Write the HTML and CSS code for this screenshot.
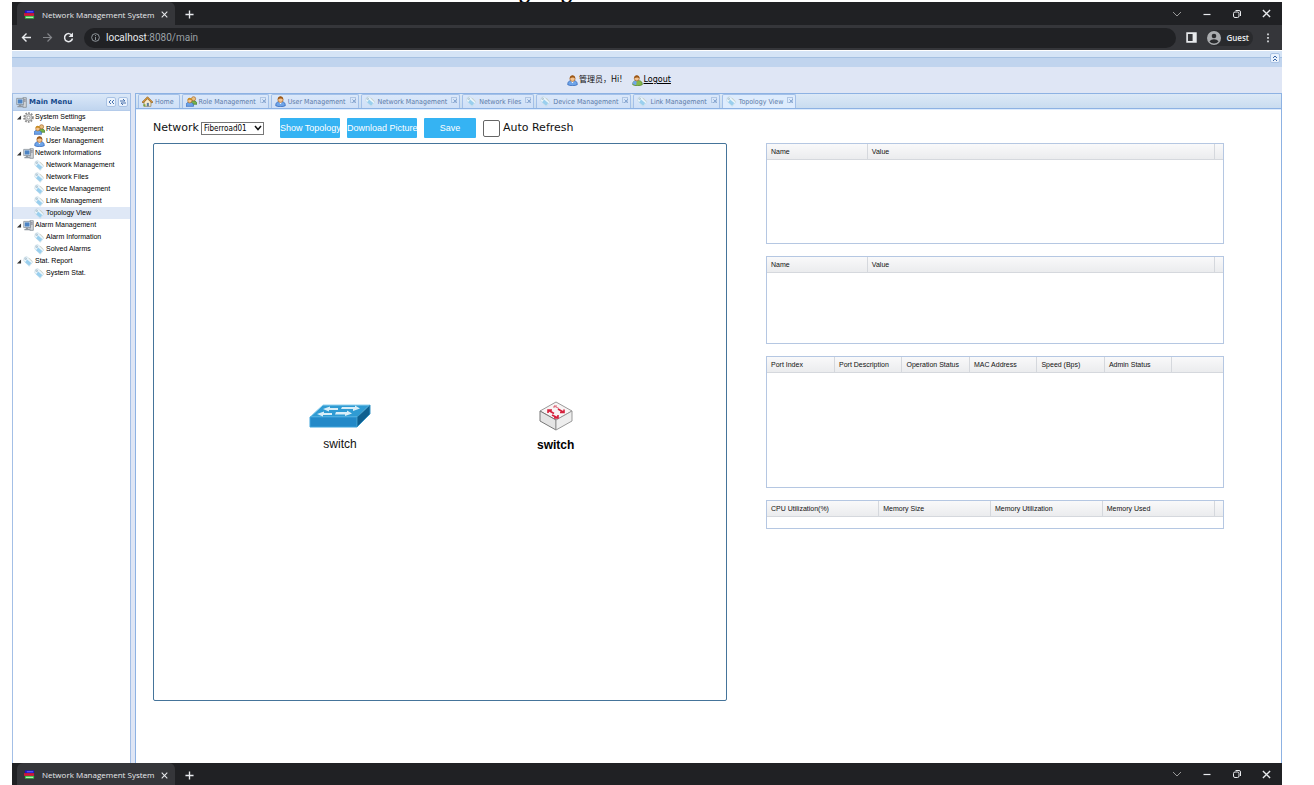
FILE: index.html
```
<!DOCTYPE html>
<html lang="en">
<head>
<meta charset="utf-8">
<title>Network Management System</title>
<link rel="stylesheet" href="styles.css">
</head>
<body>
<svg class="sprite" aria-hidden="true">
  <symbol id="i-fav" viewBox="0 0 12 10"><path fill="#1c14c8" d="M1 0h10v3H1z"/><path fill="#7a70ff" d="M3 1h7v1H3z"/><path fill="#d0143c" d="M0 3h11v3H0z"/><path fill="#30c040" d="M1 6h10v3H1z"/><path fill="#d8ffd0" d="M2 7h8v1H2z"/></symbol>
  <symbol id="i-tag" viewBox="0 0 16 16"><path d="M2 2l4-1 8 8-5 6-8-8z" fill="#edf7fc" stroke="#c3d8e4"/><path d="M6 5l6 5-3 4-6-5z" fill="#9acfee"/><path d="M9 3l5 5" stroke="#c9c9b8"/><circle cx="4" cy="4" r="1.2" fill="#fff" stroke="#8aa9bd"/></symbol>
  <symbol id="i-user" viewBox="0 0 16 16"><path d="M1 14c0-5 3-6 7-6s7 1 7 6c-3 2-11 2-14 0z" fill="#6ea4e8" stroke="#2f62b5"/><path d="M6 9l2 3 2-3z" fill="#fff"/><circle cx="8" cy="5.500" r="3.800" fill="#f3c391" stroke="#a8682a"/><path d="M4 5c0-6 8-6 8 0-2-2-5-2-8 0z" fill="#9c5716"/></symbol>
  <symbol id="i-out" viewBox="0 0 16 16"><path d="M1 14c0-5 3-6 7-6s7 1 7 6c-3 2-11 2-14 0z" fill="#86b84a" stroke="#4d7f2a"/><path d="M1 13c0-4 3-5 6-5l-1 7z" fill="#6ea4e8"/><circle cx="7" cy="5" r="3.600" fill="#f3c391" stroke="#a8682a"/><path d="M3 5c0-6 8-6 8 0-2-2-5-2-8 0z" fill="#9c5716"/></symbol>
  <symbol id="i-role" viewBox="0 0 16 16"><path d="M7 12c0-4 2-5 4-5 3 0 5 2 5 5z" fill="#77b34a" stroke="#43792a"/><circle cx="11" cy="4" r="3" fill="#eac07f" stroke="#a8682a"/><path d="M0 15c0-5 2-6 5-6s6 1 6 6z" fill="#6ea4e8" stroke="#2f62b5"/><circle cx="5.500" cy="7" r="3" fill="#f3c391" stroke="#b5751f"/><path d="M2 6c1-5 6-4 7 0-3-1-5-1-7 0z" fill="#c98b1c"/></symbol>
  <symbol id="i-home" viewBox="0 0 16 16"><path d="M3 8v7h10V8L8 3z" fill="#f7ecd0" stroke="#8a7a52"/><path d="M0 9l8-8 8 8-2 1-6-6-6 6z" fill="#d99a3c" stroke="#8e5c18"/><path d="M7 10h3v5H7z" fill="#5d7e9c"/><path d="M2 15h3v-3H2z" fill="#78a83c"/></symbol>
  <symbol id="i-pc" viewBox="0 0 16 16"><path d="M10 1h5v14h-5z" fill="#d2d6da" stroke="#777f88"/><path d="M11 4h3M11 6h3" stroke="#667"/><path d="M1 2h10v9H1z" fill="#dfe5ea" stroke="#78828c"/><path d="M2.500 3.500h7v6h-7z" fill="#4d84c4"/><path d="M4 11h4v2H4zM2 13h8v2H2z" fill="#9098a0"/></symbol>
  <symbol id="i-gear" viewBox="0 0 16 16"><circle cx="8" cy="8" r="6.200" fill="none" stroke="#8c8c8c" stroke-width="3" stroke-dasharray="2.400 1.600"/><circle cx="8" cy="8" r="5" fill="#d6d6d6" stroke="#909090"/><circle cx="8" cy="8" r="2" fill="#fff" stroke="#888"/></symbol>
  <symbol id="i-arrow" viewBox="0 0 6 6"><path d="M5.500.5v5h-5z" fill="#333"/></symbol>
  <symbol id="i-x" viewBox="0 0 10 10"><path d="M1 1l8 8M9 1l-8 8" stroke="currentColor" stroke-width="1.500" fill="none"/></symbol>
  <symbol id="i-plus" viewBox="0 0 10 10"><path d="M5 .5v9M.5 5h9" stroke="currentColor" stroke-width="1.500"/></symbol>
  <symbol id="i-down" viewBox="0 0 10 10"><path d="M1 3l4 4 4-4" stroke="currentColor" fill="none"/></symbol>
  <symbol id="i-min" viewBox="0 0 10 10"><path d="M1.500 5.500h7" stroke="currentColor" stroke-width="1.200"/></symbol>
  <symbol id="i-restore" viewBox="0 0 10 10"><rect x="1.500" y="3" width="5.500" height="5.500" rx="1.500" fill="none" stroke="currentColor"/><path d="M3.500 1.500H7Q8.500 1.500 8.500 3v4" fill="none" stroke="currentColor"/></symbol>
</svg>

<div class="page">
  <div class="cut-heading" aria-hidden="true"><span>g</span><span>g</span></div>

  <div class="tabbar">
    <div class="browser-tab">
      <svg class="fav"><use href="#i-fav"/></svg>
      <span>Network Management System</span>
      <button class="plain" aria-label="Close tab"><svg class="g7"><use href="#i-x"/></svg></button>
    </div>
    <button class="plain new-tab" aria-label="New tab"><svg class="g9"><use href="#i-plus"/></svg></button>
    <div class="window-buttons">
      <button class="plain dim" aria-label="Search tabs"><svg class="g10"><use href="#i-down"/></svg></button>
      <button class="plain" aria-label="Minimize"><svg class="g10"><use href="#i-min"/></svg></button>
      <button class="plain" aria-label="Restore"><svg class="g10"><use href="#i-restore"/></svg></button>
      <button class="plain" aria-label="Close"><svg class="g9"><use href="#i-x"/></svg></button>
    </div>
  </div>

  <div class="toolbar">
    <button class="plain" aria-label="Back"><svg class="g11" viewBox="0 0 11 11"><path d="M10 5.500H1.500M5.500 1.500l-4 4 4 4" stroke="currentColor" stroke-width="1.400" fill="none"/></svg></button>
    <button class="plain faded" aria-label="Forward"><svg class="g11" viewBox="0 0 11 11"><path d="M1 5.500h8.500M5.500 1.500l4 4-4 4" stroke="currentColor" stroke-width="1.200" fill="none"/></svg></button>
    <button class="plain" aria-label="Reload"><svg class="g11" viewBox="0 0 11 11"><path d="M9 3.500A4 4 0 1 0 9.500 6.500" stroke="currentColor" stroke-width="1.500" fill="none"/><path d="M10 .5v4.500H5.500z" fill="currentColor"/></svg></button>
    <div class="address">
      <svg class="g9" viewBox="0 0 10 10"><circle cx="5" cy="5" r="4.300" fill="none" stroke="currentColor"/><path d="M5 4.500V8M5 2.300v1.200" stroke="currentColor"/></svg>
      <span><b>localhost</b>:8080/main</span>
    </div>
    <button class="plain" aria-label="Side panel"><svg class="g11" viewBox="0 0 10 10"><path d="M1 1h8v8H1z" fill="none" stroke="currentColor" stroke-width="1.500"/><path d="M6 1h3v8H6z" fill="currentColor"/></svg></button>
    <button class="plain guest"><svg class="avatar" viewBox="0 0 14 14"><circle cx="7" cy="7" r="7" fill="#a9abae"/><circle cx="7" cy="5" r="2.300" fill="#292a2d"/><path d="M2.500 10.500c2-3 7-3 9 0-2 2.500-7 2.500-9 0z" fill="#292a2d"/></svg>Guest</button>
    <button class="plain" aria-label="Menu"><svg class="g10" viewBox="0 0 10 10"><path d="M4.200.5h1.600v1.800H4.200zM4.200 4h1.600v1.800H4.200zM4.200 7.500h1.600v1.800H4.200z" fill="currentColor"/></svg></button>
  </div>

  <header class="north">
    <div class="north-title"><button class="tool" aria-label="Collapse header"><svg viewBox="0 0 8 8"><path d="M2 4l2-2 2 2M2 7l2-2 2 2" fill="none" stroke="#3b66a5"/></svg></button></div>
    <div class="greeting">
      <svg class="ico"><use href="#i-user"/></svg><span class="hello">管理员，Hi!</span>
      <svg class="ico"><use href="#i-out"/></svg><a href="#logout">Logout</a>
    </div>
  </header>

  <div class="app">
    <nav class="side" aria-label="Main Menu">
      <div class="side-title">
        <svg class="ico"><use href="#i-pc"/></svg><h2>Main Menu</h2>
        <button class="tool" aria-label="Collapse menu"><svg viewBox="0 0 8 8"><path d="M4 2L2 4l2 2M7 2L5 4l2 2" fill="none" stroke="#4a73ad"/></svg></button>
        <button class="tool" aria-label="Refresh menu"><svg viewBox="0 0 8 8"><path d="M1 3h5M4 1l2 2M7 5H2M4 7L2 5" fill="none" stroke="#4a73ad"/></svg></button>
      </div>
      <ul class="tree">
        <li><a href="#s"><svg class="arw"><use href="#i-arrow"/></svg><svg class="ico"><use href="#i-gear"/></svg>System Settings</a>
          <ul>
            <li><a href="#s1"><svg class="ico"><use href="#i-role"/></svg>Role Management</a></li>
            <li><a href="#s2"><svg class="ico"><use href="#i-user"/></svg>User Management</a></li>
          </ul></li>
        <li><a href="#n"><svg class="arw"><use href="#i-arrow"/></svg><svg class="ico"><use href="#i-pc"/></svg>Network Informations</a>
          <ul>
            <li><a href="#n1"><svg class="ico"><use href="#i-tag"/></svg>Network Management</a></li>
            <li><a href="#n2"><svg class="ico"><use href="#i-tag"/></svg>Network Files</a></li>
            <li><a href="#n3"><svg class="ico"><use href="#i-tag"/></svg>Device Management</a></li>
            <li><a href="#n4"><svg class="ico"><use href="#i-tag"/></svg>Link Management</a></li>
            <li><a href="#n5" class="current"><svg class="ico"><use href="#i-tag"/></svg>Topology View</a></li>
          </ul></li>
        <li><a href="#a"><svg class="arw"><use href="#i-arrow"/></svg><svg class="ico"><use href="#i-pc"/></svg>Alarm Management</a>
          <ul>
            <li><a href="#a1"><svg class="ico"><use href="#i-tag"/></svg>Alarm Information</a></li>
            <li><a href="#a2"><svg class="ico"><use href="#i-tag"/></svg>Solved Alarms</a></li>
          </ul></li>
        <li><a href="#r"><svg class="arw"><use href="#i-arrow"/></svg><svg class="ico"><use href="#i-tag"/></svg>Stat. Report</a>
          <ul>
            <li><a href="#r1"><svg class="ico"><use href="#i-tag"/></svg>System Stat.</a></li>
          </ul></li>
      </ul>
    </nav>

    <main class="center">
      <div class="tabs">
        <div class="tab"><button class="plain"><svg class="ico"><use href="#i-home"/></svg>Home</button></div>
        <div class="tab"><button class="plain"><svg class="ico"><use href="#i-role"/></svg>Role Management</button><button class="close" aria-label="Close"><svg><use href="#i-x"/></svg></button></div>
        <div class="tab"><button class="plain"><svg class="ico"><use href="#i-user"/></svg>User Management</button><button class="close" aria-label="Close"><svg><use href="#i-x"/></svg></button></div>
        <div class="tab"><button class="plain"><svg class="ico"><use href="#i-tag"/></svg>Network Management</button><button class="close" aria-label="Close"><svg><use href="#i-x"/></svg></button></div>
        <div class="tab"><button class="plain"><svg class="ico"><use href="#i-tag"/></svg>Network Files</button><button class="close" aria-label="Close"><svg><use href="#i-x"/></svg></button></div>
        <div class="tab"><button class="plain"><svg class="ico"><use href="#i-tag"/></svg>Device Management</button><button class="close" aria-label="Close"><svg><use href="#i-x"/></svg></button></div>
        <div class="tab"><button class="plain"><svg class="ico"><use href="#i-tag"/></svg>Link Management</button><button class="close" aria-label="Close"><svg><use href="#i-x"/></svg></button></div>
        <div class="tab active"><button class="plain"><svg class="ico"><use href="#i-tag"/></svg>Topology View</button><button class="close" aria-label="Close"><svg><use href="#i-x"/></svg></button></div>
      </div>

      <div class="view">
        <form class="controls">
          <label for="network">Network</label>
          <span class="picker"><select id="network"><option>Fiberroad01</option></select><svg viewBox="0 0 8 6"><path d="M1 1l3 3.500L7 1" fill="none" stroke="#111" stroke-width="1.500"/></svg></span>
          <button type="button" class="action show">Show Topology</button>
          <button type="button" class="action download">Download Picture</button>
          <button type="button" class="action save">Save</button>
          <input type="checkbox" id="auto"><label for="auto">Auto Refresh</label>
        </form>
        <div class="columns">
          <section class="canvas" aria-label="Topology">
            <div class="node node-blue">
              <svg width="62" height="26" viewBox="0 0 62 26"><path d="M14 2h47L48 14H1z" fill="#2f9bd3" stroke="#8fd0ee"/><path d="M1 14h47v10H1z" fill="#2389c8" stroke="#3ea4dc"/><path d="M48 14L61 2v9L48 24z" fill="#0f5f8f" stroke="#3996c6"/><g fill="#d9eef8"><path d="M33 4h13V2.500l5 3-7 2.500V6H32zM29 5v2H20v1.500l-6-2.500 7-2.500V5zM27 9h11V7.500l5 3-7 2.500v-1.500H26zM23 10v2H14v1.500L8 11l7-2.500V10z"/></g></svg>
              <span>switch</span>
            </div>
            <div class="node node-red">
              <svg width="34" height="30" viewBox="0 0 34 30"><path d="M17 1l16 9-16 9L1 10z" fill="#f8f4f4" stroke="#999"/><path d="M1 10l16 9v10L1 20z" fill="#e4e4e4" stroke="#777"/><path d="M33 10l-16 9v10l16-9z" fill="#eee" stroke="#999"/><g fill="none" stroke="#d5213c" stroke-width="1.600"><path d="M9 9l6 3.500M9 12V9h4M19 8l6 3.500M25 8.500v3h-4M13 14l6 3M19 14v3h-4"/><path d="M15 5l5 2.500M15 7V5h3" stroke="#dc6576" stroke-width="1"/></g></svg>
              <span>switch</span>
            </div>
          </section>
          <div class="panels">
            <div class="panel p-device"><table aria-label="Device details"><colgroup><col class="w22"><col><col class="w2"></colgroup><thead><tr><th>Name</th><th>Value</th><td></td></tr></thead></table></div>
            <div class="panel p-link"><table aria-label="Link details"><colgroup><col class="w22"><col><col class="w2"></colgroup><thead><tr><th>Name</th><th>Value</th><td></td></tr></thead></table></div>
            <div class="panel p-port"><table aria-label="Ports"><colgroup><col class="w15"><col class="w15"><col class="w15"><col class="w15"><col class="w15"><col class="w15"><col></colgroup><thead><tr><th>Port Index</th><th>Port Description</th><th>Operation Status</th><th>MAC Address</th><th>Speed (Bps)</th><th>Admin Status</th><td></td></tr></thead></table></div>
            <div class="panel p-cpu"><table aria-label="Utilization"><colgroup><col><col><col><col><col class="w2"></colgroup><thead><tr><th>CPU Utilization(%)</th><th>Memory Size</th><th>Memory Utilization</th><th>Memory Used</th><td></td></tr></thead></table></div>
          </div>
        </div>
      </div>
    </main>
  </div>

  <div class="tabbar bottom">
    <div class="browser-tab">
      <svg class="fav"><use href="#i-fav"/></svg>
      <span>Network Management System</span>
      <button class="plain" aria-label="Close tab"><svg class="g7"><use href="#i-x"/></svg></button>
    </div>
    <button class="plain new-tab" aria-label="New tab"><svg class="g9"><use href="#i-plus"/></svg></button>
    <div class="window-buttons">
      <button class="plain dim" aria-label="Search tabs"><svg class="g10"><use href="#i-down"/></svg></button>
      <button class="plain" aria-label="Minimize"><svg class="g10"><use href="#i-min"/></svg></button>
      <button class="plain" aria-label="Restore"><svg class="g10"><use href="#i-restore"/></svg></button>
      <button class="plain" aria-label="Close"><svg class="g9"><use href="#i-x"/></svg></button>
    </div>
  </div>
</div>
</body>
</html>
```
FILE: styles.css
```
* { box-sizing: border-box; }
body { margin: 0; background: #fff; font: 7px/12px "Liberation Sans", "Noto Sans CJK SC", sans-serif; color: #111; }
svg { display: block; flex: none; }
.sprite { width: 0; height: 0; position: absolute; }
.page { display: flex; flex-direction: column; min-height: 100vh; padding: 0 32px 0 12px; }
button { font: inherit; cursor: pointer; }
.plain { display: flex; align-items: center; border: 0; padding: 0; background: none; color: inherit; }

.cut-heading { display: flex; align-items: flex-end; gap: 31px; height: 2px; padding-left: 507px; overflow: hidden; font: bold 22px/22px "Liberation Serif", serif; color: #000; }

.ico { width: 11px; height: 11px; }
.g7 { width: 7px; height: 7px; }
.g9 { width: 9px; height: 9px; }
.g10 { width: 10px; height: 10px; }
.g11 { width: 11px; height: 11px; }

/* Browser frame */
.tabbar { display: flex; align-items: stretch; height: 23px; background: #202124; color: #e8eaed; padding-right: 11px; }
.tabbar.bottom { height: 22px; }
.browser-tab { display: flex; align-items: center; gap: 7px; margin-left: 5px; padding: 2px 7px 0; background: #35363a; border-radius: 6px 6px 0 0; font: 8px/12px "Open Sans", "Noto Sans", sans-serif; }
.fav { width: 11px; height: 10px; }
.new-tab { margin-left: 10px; padding-top: 2px; }
.window-buttons { display: flex; align-items: center; gap: 20px; margin-left: auto; }
.dim { color: #999; }
.toolbar { display: flex; align-items: center; gap: 10px; height: 25px; padding: 0 9px; background: #35363a; color: #e8eaed; }
.faded { color: #84868a; }
.address { flex: 1; display: flex; align-items: center; gap: 6px; height: 20px; padding: 0 7px; border-radius: 10px; background: #202124; color: #9aa0a6; font: 10px/12px Roboto, "Noto Sans", sans-serif; }
.address b { font-weight: 400; color: #e8eaed; }
.guest { gap: 5px; height: 16px; padding-right: 4px; border-radius: 8px; background: #292a2d; font: 600 8px/12px "Open Sans", sans-serif; }
.avatar { width: 14px; height: 14px; }

/* Application header */
.north { border-top: 1px solid #fff; background: #dfe6f5; }
.north-title { display: flex; justify-content: flex-end; align-items: flex-start; height: 16px; padding: 2px 2px 0; background: linear-gradient(#d5e4f6 0 6px, #a5c1e2 6px 7px, #c0d4ee 7px); }
.tool { display: block; width: 10px; height: 10px; padding: 0; border: 1px solid #a9c2e4; border-radius: 2px; background: #eaf2fc; }
.tool svg { width: 8px; height: 8px; }
.greeting { display: flex; justify-content: center; align-items: center; height: 26px; gap: 1px; padding-right: 56px; font: 8px/12px "DejaVu Sans", "Noto Sans CJK SC", sans-serif; }
.hello { margin-right: 8px; }
.greeting a { color: #000; }

.app { flex: 1; display: flex; gap: 4px; background: #dfe6f5; }
.side { width: 119px; border: 1px solid #a3bfe6; background: #fff; border-bottom: 0; }
.side-title { display: flex; align-items: center; gap: 2px; height: 17px; padding: 0 2px 0 3px; background: linear-gradient(#dbe8f8, #c0d5ef); border-bottom: 1px solid #b4cbea; }
.side-title h2 { flex: 1; margin: 0; font: bold 7px/12px "DejaVu Sans", sans-serif; color: #15498b; }
.tree, .tree ul { list-style: none; margin: 0; padding: 0; }
.tree a { display: flex; align-items: center; gap: 1px; height: 12px; padding-left: 3px; color: #000; text-decoration: none; }
.tree ul a { padding-left: 21px; }
.tree .current { background: #dfe8f6; }
.arw { width: 6px; height: 5px; }

.center { flex: 1; min-width: 0; display: flex; flex-direction: column; border: 1px solid #8db2e3; border-bottom: 0; background: #fff; }
.tabs { display: flex; gap: 2px; height: 15px; padding: 0 2px; background: linear-gradient(#dce9f7, #c9dcf0); border-bottom: 1px solid #8db2e3; box-shadow: 0 1px #deecfd; }
.tab { display: flex; align-items: flex-start; gap: 4px; padding: 0 2px 0 3px; border: 1px solid #a3c0e8; border-bottom: 0; border-radius: 2px 2px 0 0; background: linear-gradient(#dbe8fa, #cfe0f7); font: 7px/12px "DejaVu Sans Condensed", sans-serif; color: #5c7ba8; }
.tab:first-child { padding-right: 5px; }
.tab .plain { gap: 2px; height: 13px; }
.active { background: #deecfd; }
.close { width: 6px; height: 6px; margin-top: 2px; padding: 1px; border: 1px solid #b0c6e4; background: none; color: #5580b8; }
.close svg { width: 4px; height: 4px; }

/* Topology view */
.view { flex: 1; display: flex; flex-direction: column; padding: 8px 57px 62px 17px; }
.controls { display: flex; align-items: center; height: 22px; margin-bottom: 4px; font: 11px/16px "DejaVu Sans", sans-serif; }
.picker { display: grid; align-items: center; width: 63px; margin: 0 16px 0 2px; }
.picker > * { grid-area: 1 / 1; }
.picker svg { justify-self: end; width: 8px; height: 6px; margin-right: 2px; pointer-events: none; }
select { appearance: none; width: 100%; height: 13px; margin: 0; padding: 1px 2px 0; border: 1px solid #777; border-radius: 0; background: #fff; font: 8px/10px "DejaVu Sans Condensed", sans-serif; color: #000; }
.action { height: 20px; margin-right: 7px; padding: 0; border: 0; border-radius: 1px; background: #35b3f3; color: #fff; font: 9px/12px "Liberation Sans", sans-serif; white-space: nowrap; }
.show { width: 60px; }
.download { width: 70px; }
.save { width: 52px; }
input { appearance: none; width: 17px; height: 17px; margin: 0 3px 0 0; border: 1px solid #666; border-radius: 2px; background: #fff; }
input:checked { background: #35b3f3; }
.columns { flex: 1; display: grid; grid-template-columns: 574fr 458fr; gap: 39px; }
.canvas { position: relative; border: 1px solid #45749a; border-radius: 2px; }
.node { position: absolute; display: flex; flex-direction: column; align-items: center; font: 12px/16px "Liberation Sans", sans-serif; }
.node-blue { left: 155px; top: 259px; gap: 7px; }
.node-red { left: 383px; top: 257px; gap: 6px; font-weight: bold; color: #000; }
.panels { display: flex; flex-direction: column; gap: 12px; }
.panel { border: 1px solid #b5c7e2; }
.p-device { min-height: 101px; }
.p-link { min-height: 88px; }
.p-port { min-height: 132px; }
.p-cpu { min-height: 29px; }
table { width: 100%; border-collapse: collapse; table-layout: fixed; background: linear-gradient(#f9f9fa, #ebecee); border-bottom: 1px solid #d5d8dd; }
th, td { height: 15px; padding: 2px 4px 0; border-right: 1px solid #d5d8dd; text-align: left; font: 7px/12px "Liberation Sans", sans-serif; white-space: nowrap; }
td { border-right: 0; }
.w22 { width: 22%; }
.w2 { width: 9px; }
.w15 { width: 14.8%; }
```
